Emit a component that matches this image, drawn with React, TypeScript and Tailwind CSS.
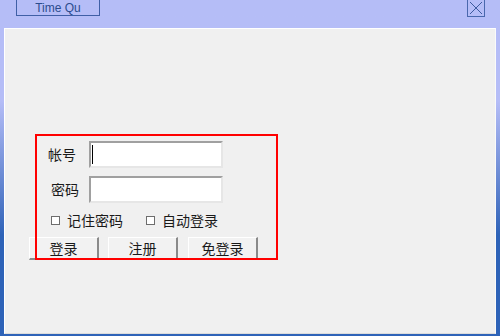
const cjk = "font-['Noto_Sans_CJK_SC','Microsoft_YaHei',sans-serif]"

function Field({ label, labelOffset, inputOffset, caret }: { label: string; labelOffset: string; inputOffset: string; caret?: boolean }) {
  return (
    <div className="flex items-center h-[28px]">
      <span className={`${labelOffset} text-[14px] leading-none text-[#1a1a1a]`}>{label}</span>
      <div
        className={`${inputOffset} w-[134px] h-[27px] bg-white border-2 border-t-[#a0a0a0] border-l-[#a0a0a0] border-r-[#e6e6e6] border-b-[#e6e6e6] flex items-center pl-[1px]`}
      >
        {caret && <span className="w-px h-[19px] bg-black" />}
      </div>
    </div>
  )
}

function Check({ label, offset }: { label: string; offset: string }) {
  return (
    <label className={`${offset} flex items-center gap-[7px]`}>
      <span className="w-[9px] h-[9px] bg-white border border-[#6d6d6d]" />
      <span className="text-[14px] leading-none text-[#1a1a1a]">{label}</span>
    </label>
  )
}

function WinButton({ children, className = '' }: { children: React.ReactNode; className?: string }) {
  return (
    <button className={`${className} w-[70px] h-[23px] bg-[#f2f2f2] border-t border-l border-white border-r-2 border-b-2 border-r-[#8a8a8a] border-b-[#8a8a8a] text-[14px] leading-none text-[#1a1a1a] flex items-center justify-center`}>
      {children}
    </button>
  )
}

export default function App() {
  return (
    <div className={`relative w-[500px] h-[336px] flex flex-col bg-gradient-to-b from-[#b5bdf7] from-30% to-[#2e63b8] to-70% ${cjk}`}>
      {/* Title bar */}
      <div className="h-[28px] flex items-start shrink-0">
        <div className="ml-[16px] w-[84px] h-[16px] border border-t-0 border-[#3f5fa6] flex items-center justify-center font-['Liberation_Sans',Arial,sans-serif] text-[12px] leading-none text-[#2b4c8e]">
          Time Qu
        </div>
        <div className="ml-auto mr-[15px] w-[18px] h-[17px] border border-t-0 border-[#4a68ad] flex items-center justify-center">
          <svg width="14" height="14" viewBox="0 0 14 14">
            <path d="M1 1 L13 13 M13 1 L1 13" stroke="#3d5a9e" strokeWidth="1" fill="none" />
          </svg>
        </div>
      </div>

      {/* Client area */}
      <div className="flex-1 mx-[4px] mb-[2px] bg-[#f0f0f0] border-t border-l border-white border-r border-r-[#fafafa] border-b border-b-[#dcdcdc] pl-[24px] pt-[111px] flex flex-col">
        <Field label="帐号" labelOffset="ml-[19px]" inputOffset="ml-[13px]" caret />
        <div className="mt-[7px]">
          <Field label="密码" labelOffset="ml-[22px]" inputOffset="ml-[10px]" />
        </div>
        <div className="mt-[8px] h-[18px] flex items-center">
          <Check label="记住密码" offset="ml-[22px]" />
          <Check label="自动登录" offset="ml-[23px]" />
        </div>
        <div className="mt-[8px] flex">
          <WinButton>登录</WinButton>
          <WinButton className="ml-[9px]">注册</WinButton>
          <WinButton className="ml-[10px]">免登录</WinButton>
        </div>
      </div>

      {/* Red highlight annotation */}
      <div className="absolute left-[35px] top-[134px] w-[243px] h-[126px] border-2 border-[#ff0000] pointer-events-none" />
    </div>
  )
}
